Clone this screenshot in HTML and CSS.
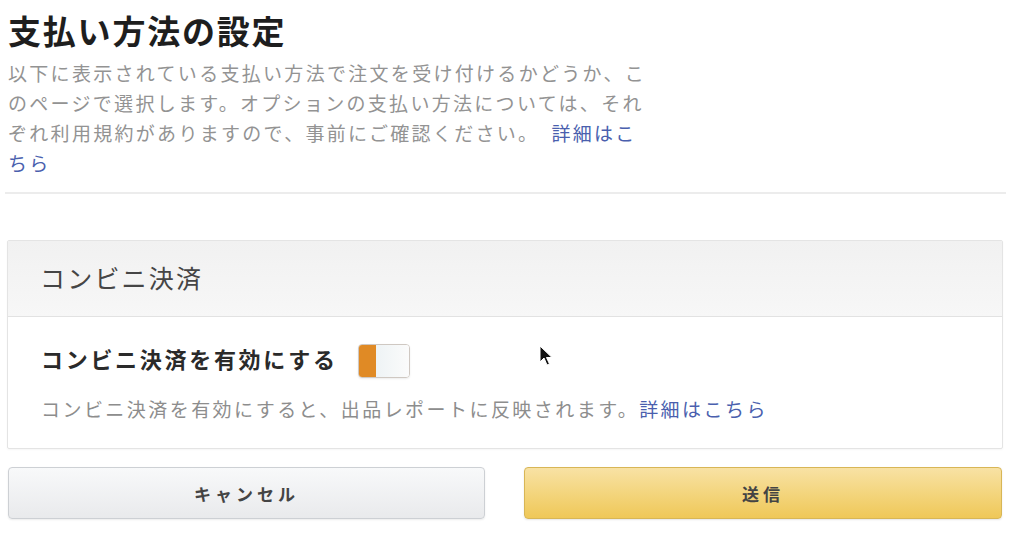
FILE: index.html
```html
<!DOCTYPE html>
<html lang="ja">
<head>
<meta charset="utf-8">
<title>支払い方法の設定</title>
<link rel="stylesheet" href="styles.css">
</head>
<body>
<main class="page">
  <h1 class="title">支払い方法の設定</h1>
  <p class="intro">以下に表示されている支払い方法で注文を受け付けるかどうか、このページで選択します。オプションの支払い方法については、それぞれ利用規約がありますので、事前にご確認ください。<a class="link link-gap" href="#">詳細はこちら</a></p>
  <hr class="divider">
  <section class="panel">
    <header class="panel-head">コンビニ決済</header>
    <div class="panel-body">
      <div class="toggle-row">
        <span class="toggle-label">コンビニ決済を有効にする</span>
        <span class="toggle"><span class="toggle-on"></span><span class="toggle-off"></span></span>
      </div>
      <p class="note">コンビニ決済を有効にすると、出品レポートに反映されます。<a class="link" href="#">詳細はこちら</a></p>
    </div>
  </section>
  <div class="actions">
    <button class="btn btn-cancel" type="button">キャンセル</button>
    <button class="btn btn-submit" type="button">送信</button>
  </div>
  <svg class="cursor" width="14" height="22" viewBox="0 0 14 22"><path d="M1 1 L1 17 L5 13 L8 20 L10.5 19 L7.5 12.5 L13 12.5 Z" fill="#111" stroke="#fff" stroke-width="1"/></svg>
</main>
</body>
</html>
```
FILE: styles.css
```css
* { box-sizing: border-box; }
html, body { margin: 0; padding: 0; background: #fff; }
body {
  font-family: "Noto Sans CJK JP", "Noto Sans", sans-serif;
  color: #222;
}
.page {
  position: relative;
  padding: 10px 18px 0 8px;
  width: 1024px;
  height: 541px;
  overflow: hidden;
}
.title {
  margin: 0;
  font-size: 33px;
  line-height: 40px;
  font-weight: 700;
  letter-spacing: 1.8px;
  color: #1e1e1e;
}
.intro {
  margin: 8px 0 0;
  width: 648px;
  font-size: 19px;
  line-height: 30px;
  letter-spacing: 2.3px;
  color: #939393;
  line-break: anywhere;
}
.link { color: #4a5fae; text-decoration: none; }
.link-gap { margin-left: 12px; }
.divider {
  margin: 14px 0 0 -3px;
  width: 1001px;
  height: 2px;
  border: 0;
  background: #ececec;
}
.panel {
  margin: 46px 0 0 -1px;
  width: 996px;
  border: 1px solid #e4e4e4;
  border-radius: 2px;
  box-shadow: 0 1px 2px rgba(0,0,0,0.04);
}
.panel-head {
  padding: 21px 32px 24px;
  font-size: 25px;
  line-height: 30px;
  letter-spacing: 2.2px;
  color: #454545;
  background: linear-gradient(#f1f1f1, #f7f7f7);
  border-bottom: 1px solid #e2e2e2;
}
.panel-body { padding: 27px 33px 26px; }
.toggle-row {
  display: flex;
  align-items: center;
  gap: 20px;
  height: 33px;
}
.toggle-label {
  font-size: 22px;
  font-weight: 700;
  letter-spacing: 2.7px;
  color: #2a2a2a;
  line-height: 30px;
  padding-bottom: 6px;
}
.toggle {
  display: flex;
  width: 52px;
  height: 34px;
  border: 1px solid #cfc8c2;
  border-radius: 4px;
  overflow: hidden;
  box-shadow: 0 1px 2px rgba(0,0,0,0.08);
}
.toggle-on { width: 17px; background: #e08a25; }
.toggle-off { flex: 1; background: linear-gradient(90deg, #eef3f5, #fbfbfb); }
.note {
  margin: 19px 0 0;
  font-size: 19px;
  line-height: 26px;
  letter-spacing: 2.45px;
  color: #8d8d8d;
}
.actions {
  margin-top: 18px;
  display: grid;
  grid-template-columns: 477px 478px;
  gap: 39px;
}
.btn {
  height: 52px;
  border-radius: 4px;
  font-family: "Noto Sans CJK JP", "Noto Sans", sans-serif;
  font-size: 17px;
  font-weight: 700;
  letter-spacing: 4px;
  color: #444;
  cursor: pointer;
}
.btn-cancel {
  background: linear-gradient(#f8f9fa, #e9eaec);
  border: 1px solid #cdd0d4;
  box-shadow: 0 1px 2px rgba(0,0,0,0.08);
}
.btn-submit {
  background: linear-gradient(#f8e2a4, #efc858);
  border: 1px solid #d8b656;
  box-shadow: 0 1px 2px rgba(0,0,0,0.1);
}
.cursor {
  position: absolute;
  left: 539px;
  top: 345px;
}
```
